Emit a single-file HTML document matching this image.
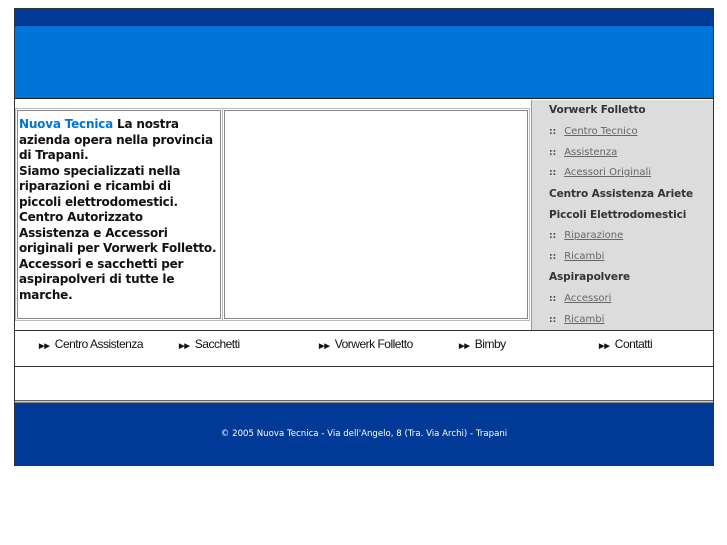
<!DOCTYPE html>
<html><head><meta charset="utf-8"><style>
*{margin:0;padding:0;box-sizing:border-box}
body{width:727px;height:545px;background:#fff;font-family:"DejaVu Sans","Liberation Sans",sans-serif;position:relative;overflow:hidden}
.a{position:absolute}
#wrap{left:14px;top:8px;width:700px;height:458px;border:1px solid #333}
.top{left:15px;top:9px;width:698px;height:17px;background:#003a96;border-bottom:1px solid #222}
.blue{left:15px;top:26px;width:698px;height:73px;background:#0074d8;border-bottom:1px solid #222}
.box{border:1px solid #888;outline:1px solid #bbb;outline-offset:1px}
.txt{left:17px;top:110px;width:204px;height:209px;padding:6px 0 0 1px;font-size:12px;font-weight:bold;line-height:15.5px;color:#111;letter-spacing:-0.2px;white-space:nowrap;overflow:hidden}
.txt span{color:#0074d8}
.mid{left:224px;top:110px;width:304px;height:209px}
.side{left:531px;top:100px;width:182px;height:230px;background:#dcdcdc;border-left:1px solid #999}
.side div{position:absolute;left:17px;font-size:10.5px;white-space:nowrap}
.side .h{font-weight:bold;color:#333;letter-spacing:-0.1px}
.side .l{left:17px;color:#666;font-size:10px}
.side .l b{font-size:9px;color:#444;margin-right:8px}
.side .l u{text-decoration:underline}
.nav{left:15px;top:330px;width:698px;height:37px;border-top:1px solid #333;border-bottom:1px solid #333}
.nav div{position:absolute;top:6px;font-size:12px;font-family:"Liberation Sans",sans-serif;color:#111;letter-spacing:-0.5px}
.nav b{font-size:7px;letter-spacing:0;margin-right:5px}
.gl{left:15px;top:400px;width:698px;height:3px;border-top:1px solid #666;border-bottom:1px solid #888;background:#ccc}
.foot{left:15px;top:403px;width:698px;height:62px;background:#003a96;color:#fff;font-size:8.6px;text-align:center;line-height:62px}
</style></head><body>
<div class="a" id="wrap"></div>
<div class="a top"></div>
<div class="a blue"></div>
<div class="a box txt"><span>Nuova Tecnica</span> La nostra<br>azienda opera nella provincia<br>di Trapani.<br>Siamo specializzati nella<br>riparazioni e ricambi di<br>piccoli elettrodomestici.<br>Centro Autorizzato<br>Assistenza e Accessori<br>originali per Vorwerk Folletto.<br>Accessori e sacchetti per<br>aspirapolveri di tutte le<br>marche.</div>
<div class="a box mid"></div>
<div class="a side">
<div class="h" style="top:4px">Vorwerk Folletto</div>
<div class="l" style="top:26px"><b>::</b><u>Centro Tecnico</u></div>
<div class="l" style="top:47px"><b>::</b><u>Assistenza</u></div>
<div class="l" style="top:67px"><b>::</b><u>Acessori Originali</u></div>
<div class="h" style="top:88px">Centro Assistenza Ariete</div>
<div class="h" style="top:109px">Piccoli Elettrodomestici</div>
<div class="l" style="top:130px"><b>::</b><u>Riparazione</u></div>
<div class="l" style="top:151px"><b>::</b><u>Ricambi</u></div>
<div class="h" style="top:171px">Aspirapolvere</div>
<div class="l" style="top:193px"><b>::</b><u>Accessori</u></div>
<div class="l" style="top:214px"><b>::</b><u>Ricambi</u></div>
</div>
<div class="a nav">
<div style="left:24px"><b>▶▶</b>Centro Assistenza</div>
<div style="left:164px"><b>▶▶</b>Sacchetti</div>
<div style="left:304px"><b>▶▶</b>Vorwerk Folletto</div>
<div style="left:444px"><b>▶▶</b>Bimby</div>
<div style="left:584px"><b>▶▶</b>Contatti</div>
</div>
<div class="a gl"></div>
<div class="a foot">© 2005 Nuova Tecnica - Via dell'Angelo, 8 (Tra. Via Archi) - Trapani</div>
</body></html>
